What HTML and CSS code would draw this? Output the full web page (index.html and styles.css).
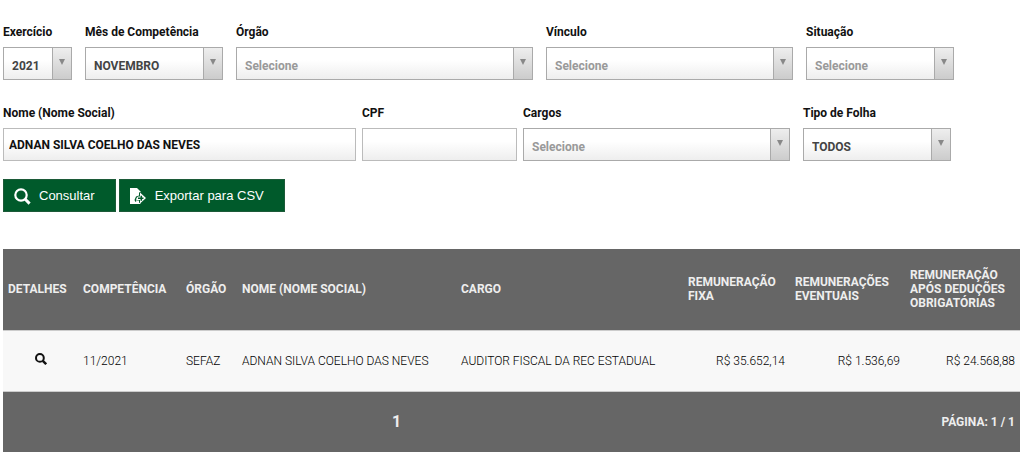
FILE: index.html
```html
<!DOCTYPE html>
<html lang="pt-BR">
<head>
    <meta charset="UTF-8">
    <meta name="viewport" content="width=device-width, initial-scale=1.0">
    <title>Consulta de Remuneração</title>
    <link rel="stylesheet" href="styles.css">
</head>
<body>
    <form class="filtros">
        <div class="linha linha-vinculo">
            <div class="campo campo-select">
                <label for="exercicio">Exercício</label>
                <select id="exercicio">
                    <option>2021</option>
                </select>
            </div>
            <div class="campo campo-select">
                <label for="mes">Mês de Competência</label>
                <select id="mes">
                    <option>NOVEMBRO</option>
                </select>
            </div>
            <div class="campo campo-select">
                <label for="orgao">Órgão</label>
                <select id="orgao" class="vazio">
                    <option>Selecione</option>
                </select>
            </div>
            <div class="campo campo-select">
                <label for="vinculo">Vínculo</label>
                <select id="vinculo" class="vazio">
                    <option>Selecione</option>
                </select>
            </div>
            <div class="campo campo-select">
                <label for="situacao">Situação</label>
                <select id="situacao" class="vazio">
                    <option>Selecione</option>
                </select>
            </div>
        </div>

        <div class="linha linha-pessoa">
            <div class="campo">
                <label for="nome">Nome (Nome Social)</label>
                <input type="text" id="nome" value="ADNAN SILVA COELHO DAS NEVES">
            </div>
            <div class="campo">
                <label for="cpf">CPF</label>
                <input type="text" id="cpf">
            </div>
            <div class="campo campo-select">
                <label for="cargos">Cargos</label>
                <select id="cargos" class="vazio">
                    <option>Selecione</option>
                </select>
            </div>
            <div class="campo campo-select">
                <label for="folha">Tipo de Folha</label>
                <select id="folha">
                    <option>TODOS</option>
                </select>
            </div>
        </div>

        <div class="acoes">
            <button type="button" class="botao">
                <svg width="18" height="18" viewBox="0 0 18 18" aria-hidden="true">
                    <circle cx="7" cy="8" r="5.700" fill="none" stroke="#fff" stroke-width="2.200"/>
                    <path d="M11 12l4.600 4.600" stroke="#fff" stroke-width="3"/>
                </svg>
                Consultar
            </button>
            <button type="button" class="botao">
                <svg width="18" height="18" viewBox="0 0 18 18" aria-hidden="true">
                    <path d="M0 1h7l4 4v12h-11z" fill="#fff"/>
                    <path d="M9 5.500l2-.5v12l-2-1.500v-2h-2l-1.500 1.500-1-2 1.500-3.500 3-1z" fill="#005a2b"/>
                    <path d="M10 5.500l6 5.500-6 5.500v-3.500h-2.500l-1.500 1 .5-3 1.500-1.500h2z" fill="#fff"/>
                    <path d="M8 11.200h5.500M11.300 8.700v5" stroke="#005a2b" stroke-width="1.600"/>
                    <path d="M0 16h9v1h-9z" fill="#fff"/>
                </svg>
                Exportar para CSV
            </button>
        </div>
    </form>

    <table class="resultado">
        <colgroup>
            <col class="col-detalhes">
            <col class="col-competencia">
            <col class="col-orgao">
            <col>
            <col class="col-cargo">
            <col class="col-fixa">
            <col class="col-valor">
            <col class="col-valor">
        </colgroup>
        <thead>
            <tr>
                <th>Detalhes</th>
                <th>Competência</th>
                <th>Órgão</th>
                <th>Nome (Nome Social)</th>
                <th>Cargo</th>
                <th>Remuneração Fixa</th>
                <th>Remunerações Eventuais</th>
                <th>Remuneração após deduções obrigatórias</th>
            </tr>
        </thead>
        <tbody>
            <tr>
                <td class="detalhes">
                    <a href="#" aria-label="Detalhes">
                        <svg width="12" height="12" viewBox="0 0 12 12" aria-hidden="true">
                            <circle cx="4.900" cy="4.900" r="3.900" fill="none" stroke="#111" stroke-width="2"/>
                            <path d="M7.800 7.800l3.400 3.400" stroke="#111" stroke-width="2.400"/>
                        </svg>
                    </a>
                </td>
                <td>11/2021</td>
                <td>SEFAZ</td>
                <td>ADNAN SILVA COELHO DAS NEVES</td>
                <td>AUDITOR FISCAL DA REC ESTADUAL</td>
                <td class="valor">R$ 35.652,14</td>
                <td class="valor">R$ 1.536,69</td>
                <td class="valor">R$ 24.568,88</td>
            </tr>
        </tbody>
        <tfoot>
            <tr>
                <td colspan="6" class="paginas">1</td>
                <td colspan="2" class="pagina-atual">Página: 1 / 1</td>
            </tr>
        </tfoot>
    </table>
</body>
</html>
```
FILE: styles.css
```css
* {
    box-sizing: border-box;
}
body {
    margin: 0;
    padding: 25px 4px 0 3px;
    background-color: #fff;
    color: #111;
    font-family: Roboto, "Liberation Sans", sans-serif;
    font-size: 12px;
}

/* Filtros */
.linha {
    display: grid;
    gap: 6px;
    margin-bottom: 26px;
}
.linha-vinculo {
    grid-template-columns: 76fr 145fr 304fr 254fr 155fr;
    padding-right: 59px;
}
.linha-pessoa {
    grid-template-columns: 353fr 155fr 274fr 155fr;
    padding-right: 62px;
    margin-bottom: 18px;
}
.campo {
    min-width: 0;
}
.campo-select {
    padding-right: 7px;
}
label {
    display: block;
    height: 15px;
    margin-bottom: 7px;
    line-height: 15px;
    font-weight: bold;
}
select,
input {
    display: block;
    width: 100%;
    height: 33px;
    margin: 0;
    border: 1px solid #aaa;
    border-radius: 0;
    font-family: inherit;
    font-size: 12px;
    font-weight: bold;
}
input {
    padding: 0 5px;
    border-color: #bbb;
    background: linear-gradient(#fff 40%, #eee);
    color: #111;
}
select {
    appearance: none;
    padding: 5px 24px 0 8px;
    background:
        url("data:image/svg+xml,%3Csvg xmlns='http://www.w3.org/2000/svg' width='6' height='6'%3E%3Cpath d='M0 0h6l-3 6z' fill='%23888'/%3E%3C/svg%3E") no-repeat right 6px top 11px,
        linear-gradient(#aaa, #aaa) no-repeat right 18px top / 1px 100%,
        linear-gradient(#eee, #ccc) no-repeat right / 18px 100%,
        linear-gradient(#fff 40%, #eee);
    color: #444;
}
select.vazio {
    color: #999;
}

/* Botões */
.acoes {
    display: flex;
    gap: 3px;
}
.botao {
    display: flex;
    align-items: center;
    gap: 7px;
    height: 33px;
    padding: 0 20px 0 10px;
    border: 1px solid #1c5a38;
    background-color: #005a2b;
    color: #fff;
    font-family: "Liberation Sans", Arial, sans-serif;
    font-size: 13px;
}

/* Tabela */
.resultado {
    width: 100%;
    margin-top: 37px;
    border-collapse: collapse;
    table-layout: fixed;
}
.col-detalhes {
    width: 75px;
}
.col-competencia {
    width: 103px;
}
.col-orgao {
    width: 56px;
}
.col-cargo {
    width: 227px;
}
.col-fixa {
    width: 107px;
}
.col-valor {
    width: 115px;
}
th,
td {
    padding: 0 5px;
    text-align: left;
    line-height: 14px;
}
th {
    height: 81px;
    background-color: #666;
    color: #eee;
    text-transform: uppercase;
}
tbody td {
    height: 61px;
    border-top: 1px solid #ccc;
    border-bottom: 1px solid #ccc;
    background-color: #f8f8f8;
    color: #000;
    font-weight: 300;
}
.detalhes {
    text-align: center;
}
.valor {
    text-align: right;
}
tfoot td {
    height: 61px;
    background-color: #666;
    color: #eee;
    font-weight: bold;
    text-transform: uppercase;
}
tfoot .paginas {
    font-size: 16px;
    text-align: center;
}
tfoot .pagina-atual {
    text-align: right;
}
```
